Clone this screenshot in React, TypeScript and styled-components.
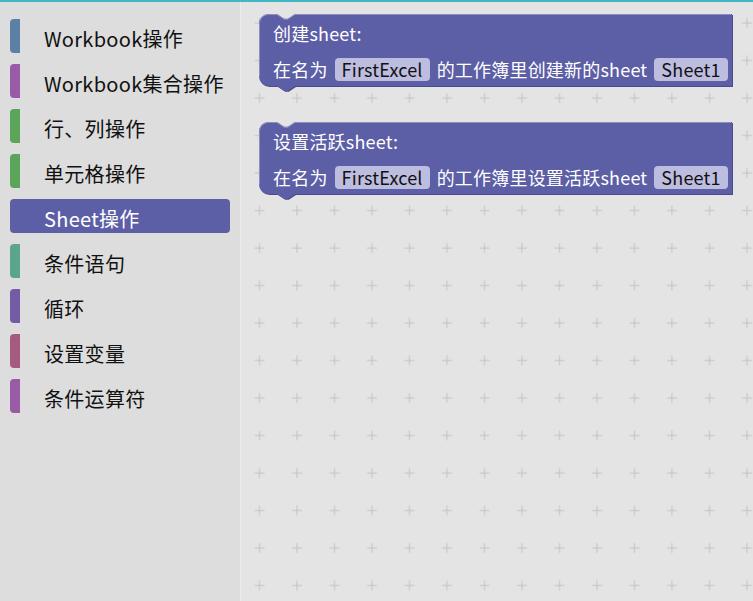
import React from "react";
import styled, { createGlobalStyle } from "styled-components";

const Global = createGlobalStyle`
  html, body { margin: 0; padding: 0; }
  body {
    width: 753px; height: 601px; overflow: hidden;
    font-family: "Noto Sans CJK SC", "Noto Sans", sans-serif;
    background: #e4e4e4;
  }
`;

const Page = styled.div`
  display: flex;
  flex-direction: column;
  width: 753px;
  height: 601px;
`;

const TopLine = styled.div`
  height: 2px;
  background: #43b6c6;
  flex: none;
`;

const Main = styled.div`
  display: flex;
  flex: 1;
  min-height: 0;
`;

const Sidebar = styled.nav`
  width: 241px;
  flex: none;
  background: #dddddd;
  border-right: 1px solid #ececec;
  box-sizing: border-box;
  padding: 17px 10px 0 10px;
  display: flex;
  flex-direction: column;
  gap: 11px;
`;

const Item = styled.div<{ $color: string; $selected?: boolean }>`
  height: 34px;
  display: flex;
  align-items: center;
  box-sizing: border-box;
  border-left: 10px solid ${(p) => p.$color};
  border-radius: ${(p) => (p.$selected ? "4px" : "4px 0 0 4px")};
  background: ${(p) => (p.$selected ? p.$color : "transparent")};
  color: ${(p) => (p.$selected ? "#ffffff" : "#111111")};
  padding-left: 24px;
  padding-top: 5px;
  font-size: 20px;
  letter-spacing: 0.3px;
  line-height: 1;
  white-space: nowrap;
`;

const Workspace = styled.div`
  position: relative;
  flex: 1;
  background: #e4e4e4;
  overflow: hidden;
`;

const Grid = styled.svg`
  position: absolute;
  left: 0;
  top: 0;
  width: 100%;
  height: 100%;
`;

const BlockWrap = styled.div<{ $w: number; $h: number }>`
  position: absolute;
  width: ${(p) => p.$w}px;
  height: ${(p) => p.$h}px;
`;

const Shape = styled.svg`
  position: absolute;
  left: 0;
  top: 0;
  overflow: visible;
`;

const Content = styled.div`
  position: relative;
  display: flex;
  flex-direction: column;
  padding-left: 14px;
  color: #ffffff;
  font-size: 18px;
  letter-spacing: 0.2px;
  line-height: 1;
  white-space: nowrap;
`;

const Row = styled.div<{ $h: number }>`
  height: ${(p) => p.$h}px;
  display: flex;
  align-items: center;
  gap: 7px;
`;

const Pill = styled.span`
  height: 23px;
  display: inline-flex;
  align-items: center;
  padding: 0 7px;
  border-radius: 4px;
  background: #bdbde0;
  color: #111111;
`;

const BLOCK = "#5c5ea6";
const DARK = "#4a4c88";
const LIGHT = "#8d8fc2";

function blockPath(w: number, h: number) {
  const r = 9.6;
  return `M0,${r} A${r},${r} 0 0,1 ${r},0 H18 l7.2,4.8 3.6,0 7.2,-4.8 H${w} V${h} H36 l-7.2,4.8 -3.6,0 -7.2,-4.8 H${r} A${r},${r} 0 0,1 0,${h - r} Z`;
}

function Block({
  left,
  top,
  title,
  action,
}: {
  left: number;
  top: number;
  title: string;
  action: string;
}) {
  const w = 473;
  const h = 72;
  return (
    <BlockWrap $w={w} $h={h} style={{ left, top }}>
      <Shape width={w} height={h + 6}>
        <path d={blockPath(w, h)} transform="translate(1,1)" fill={DARK} />
        <path d={blockPath(w, h)} fill={BLOCK} />
        <path
          d={`M0.5,${h - 9.6} V9.6 A9.1,9.1 0 0,1 9.6,0.5 H18 l7.2,4.8 3.6,0 7.2,-4.8 H${w - 1}`}
          fill="none"
          stroke={LIGHT}
          strokeWidth={1}
        />
      </Shape>
      <Content>
        <Row $h={38}>{title}</Row>
        <Row $h={34}>
          <span>在名为</span>
          <Pill>FirstExcel</Pill>
          <span>{action}</span>
          <Pill>Sheet1</Pill>
        </Row>
      </Content>
    </BlockWrap>
  );
}

const items: { label: string; color: string; selected?: boolean }[] = [
  { label: "Workbook操作", color: "#5b80a5" },
  { label: "Workbook集合操作", color: "#995ba5" },
  { label: "行、列操作", color: "#5ba55b" },
  { label: "单元格操作", color: "#5ba55b" },
  { label: "Sheet操作", color: "#5c5ea6", selected: true },
  { label: "条件语句", color: "#5ba58c" },
  { label: "循环", color: "#745ba5" },
  { label: "设置变量", color: "#a55b80" },
  { label: "条件运算符", color: "#995ba5" },
];

export default function App() {
  return (
    <>
      <Global />
      <Page>
        <TopLine />
        <Main>
          <Sidebar>
            {items.map((it) => (
              <Item key={it.label} $color={it.color} $selected={it.selected}>
                {it.label}
              </Item>
            ))}
          </Sidebar>
          <Workspace>
            <Grid>
              <defs>
                <pattern
                  id="plus"
                  patternUnits="userSpaceOnUse"
                  width="37.5"
                  height="37.5"
                  x="-1"
                  y="2"
                >
                  <path d="M14.5,19 h10 M19.5,14 v10" stroke="#c2c2c2" strokeWidth="1" />
                </pattern>
              </defs>
              <rect width="100%" height="100%" fill="url(#plus)" />
            </Grid>
            <Block left={18} top={12} title="创建sheet:" action="的工作簿里创建新的sheet" />
            <Block left={18} top={120} title="设置活跃sheet:" action="的工作簿里设置活跃sheet" />
          </Workspace>
        </Main>
      </Page>
    </>
  );
}
